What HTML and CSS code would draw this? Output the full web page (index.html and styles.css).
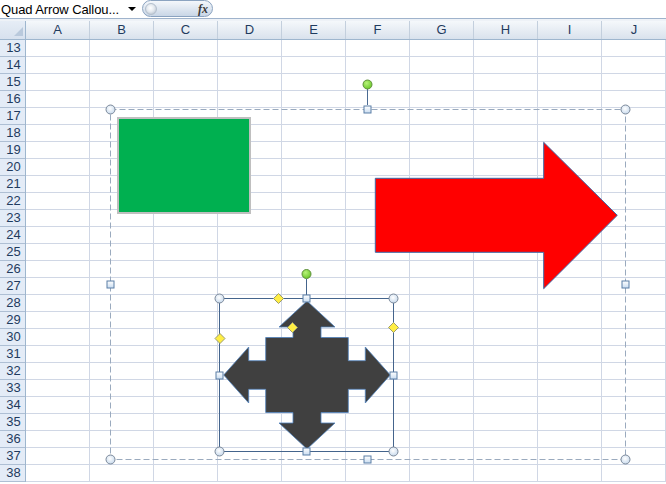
FILE: index.html
```html
<!DOCTYPE html>
<html>
<head>
<meta charset="utf-8">
<link rel="stylesheet" href="styles.css">
</head>
<body>
<div class="app">
  <div class="formula-bar">
    <div class="namebox"><span class="name-text">Quad Arrow Callou...</span><span class="dd"></span></div>
    <div class="fx-btn"><span class="knob"></span><span class="fx">fx</span></div>
    <div class="formula-input"></div>
  </div>
  <div class="bar-gap"></div>
  <div class="col-headers">
    <div class="corner"><span class="corner-tri"></span></div>
    <div class="col-head">A</div><div class="col-head">B</div><div class="col-head">C</div><div class="col-head">D</div><div class="col-head">E</div><div class="col-head">F</div><div class="col-head">G</div><div class="col-head">H</div><div class="col-head">I</div><div class="col-head">J</div>
  </div>
  <div class="body">
    <div class="row-headers">
      <div class="row-head">13</div><div class="row-head">14</div><div class="row-head">15</div><div class="row-head">16</div><div class="row-head">17</div><div class="row-head">18</div><div class="row-head">19</div><div class="row-head">20</div><div class="row-head">21</div><div class="row-head">22</div><div class="row-head">23</div><div class="row-head">24</div><div class="row-head">25</div><div class="row-head">26</div><div class="row-head">27</div><div class="row-head">28</div><div class="row-head">29</div><div class="row-head">30</div><div class="row-head">31</div><div class="row-head">32</div><div class="row-head">33</div><div class="row-head">34</div><div class="row-head">35</div><div class="row-head">36</div><div class="row-head">37</div><div class="row-head">38</div>
    </div>
    <div class="cells"></div>
  </div>

  <svg class="canvas" width="666" height="484" viewBox="0 0 666 484" xmlns="http://www.w3.org/2000/svg">
    <defs>
      <radialGradient id="hc" cx="0.45" cy="0.4" r="0.6">
        <stop offset="0" stop-color="#ffffff"/>
        <stop offset="1" stop-color="#c7d9ec"/>
      </radialGradient>
      <linearGradient id="hs" x1="0" y1="0" x2="0" y2="1">
        <stop offset="0" stop-color="#ffffff"/>
        <stop offset="1" stop-color="#c9dcf0"/>
      </linearGradient>
      <radialGradient id="gr" cx="0.4" cy="0.35" r="0.65">
        <stop offset="0" stop-color="#b8f27a"/>
        <stop offset="1" stop-color="#6cc92a"/>
      </radialGradient>
    </defs>

    <!-- shapes -->
    <rect x="118" y="118" width="132" height="95" fill="#00b050" stroke="#bfbfbf" stroke-width="2"/>
    <path d="M375.3,178.3 L543.7,178.3 L543.7,142.3 L617.3,215.3 L543.7,288.7 L543.7,252.3 L375.3,252.3 Z" fill="#ff0000" stroke="#3d6aa8" stroke-width="1"/>
    <path d="M307,301 L335,327 L321,327 L321,337.5 L348.3,337.5 L348.3,360.7 L365.3,360.7 L365.3,347 L390.3,375 L365.3,403 L365.3,389.3 L348.3,389.3 L348.3,412.5 L321,412.5 L321,423 L335,423 L307,449 L279,423 L293,423 L293,412.5 L265.7,412.5 L265.7,389.3 L248.7,389.3 L248.7,403 L223.7,375 L248.7,347 L248.7,360.7 L265.7,360.7 L265.7,337.5 L293,337.5 L293,327 L279,327 Z" fill="#404040" stroke="#4f81bd" stroke-width="0.8"/>

    <!-- group selection -->
    <rect x="110.5" y="109.5" width="515" height="350" fill="none" stroke="#9aaabe" stroke-width="1" stroke-dasharray="6 3"/>
    <line x1="367.5" y1="89" x2="367.5" y2="105" stroke="#4a6a92" stroke-width="1"/>
    <circle cx="367.5" cy="84.5" r="4.5" fill="url(#gr)" stroke="#5f8f3c" stroke-width="1"/>
    <g fill="url(#hc)" stroke="#7b8899" stroke-width="1">
      <circle cx="110.5" cy="109.5" r="4.5"/>
      <circle cx="625.5" cy="109.5" r="4.5"/>
      <circle cx="110.5" cy="459.5" r="4.5"/>
      <circle cx="625.5" cy="459.5" r="4.5"/>
    </g>
    <g fill="url(#hs)" stroke="#5b7ea6" stroke-width="1">
      <rect x="364" y="106" width="7" height="7"/>
      <rect x="107" y="281" width="7" height="7"/>
      <rect x="622" y="281" width="7" height="7"/>
      <rect x="364" y="456" width="7" height="7"/>
    </g>

    <!-- shape selection -->
    <rect x="219.5" y="298.5" width="174" height="153" fill="none" stroke="#44648c" stroke-width="1"/>
    <line x1="306.5" y1="279" x2="306.5" y2="295" stroke="#44648c" stroke-width="1"/>
    <circle cx="306.5" cy="274" r="4.5" fill="url(#gr)" stroke="#5f8f3c" stroke-width="1"/>
    <g fill="url(#hc)" stroke="#7b8899" stroke-width="1">
      <circle cx="219.5" cy="298.5" r="4.5"/>
      <circle cx="393.5" cy="298.5" r="4.5"/>
      <circle cx="219.5" cy="451.5" r="4.5"/>
      <circle cx="393.5" cy="451.5" r="4.5"/>
    </g>
    <g fill="url(#hs)" stroke="#5b7ea6" stroke-width="1">
      <rect x="303" y="295" width="7" height="7"/>
      <rect x="216" y="372" width="7" height="7"/>
      <rect x="390" y="372" width="7" height="7"/>
      <rect x="303" y="448" width="7" height="7"/>
    </g>
    <g fill="#ffee44" stroke="#9c9c70" stroke-width="1">
      <path d="M278.5,293.5 L283.5,298.5 L278.5,303.5 L273.5,298.5 Z"/>
      <path d="M220,333.5 L225,338.5 L220,343.5 L215,338.5 Z"/>
      <path d="M292.5,322.5 L297.5,327.5 L292.5,332.5 L287.5,327.5 Z"/>
      <path d="M393.5,322.5 L398.5,327.5 L393.5,332.5 L388.5,327.5 Z"/>
    </g>
  </svg>
</div>
</body>
</html>
```

FILE: styles.css
```css
* { box-sizing: border-box; }
html, body { margin: 0; padding: 0; }
body {
  width: 666px;
  height: 484px;
  overflow: hidden;
  background: #ffffff;
  font-family: "Liberation Sans", Arial, sans-serif;
}
.app {
  position: relative;
  width: 666px;
  height: 484px;
  overflow: hidden;
}
.formula-bar {
  display: flex;
  height: 19px;
  border-bottom: 1px solid #9fb3cc;
  background: #ffffff;
}
.namebox {
  width: 142px;
  display: flex;
  align-items: center;
  justify-content: space-between;
  padding-left: 1px;
  padding-right: 6px;
}
.name-text {
  font-size: 13px;
  letter-spacing: -0.1px;
  color: #000000;
  white-space: nowrap;
  line-height: 17px;
}
.dd {
  width: 0;
  height: 0;
  border-left: 4px solid transparent;
  border-right: 4px solid transparent;
  border-top: 4px solid #000000;
}
.fx-btn {
  width: 71px;
  height: 17px;
  border: 1px solid #8ba3c0;
  border-radius: 9px;
  background: linear-gradient(to bottom, #f4f7fb 0%, #dfe7f1 50%, #c9d6e6 100%);
  display: flex;
  align-items: center;
  justify-content: space-between;
  padding: 0 4px 0 2px;
}
.knob {
  width: 12px;
  height: 12px;
  border-radius: 50%;
  background: radial-gradient(circle at 45% 40%, #ffffff 0%, #e4e9ef 45%, #aab6c4 100%);
  border: 1px solid #b3bfcd;
}
.fx {
  font-family: "Liberation Serif", "Times New Roman", serif;
  font-style: italic;
  font-weight: bold;
  font-size: 12px;
  color: #3a3a3a;
  line-height: 14px;
}
.formula-input {
  flex: 1;
  background: #ffffff;
}
.bar-gap {
  height: 2px;
  background: #eef2f7;
}
.col-headers {
  display: flex;
  height: 19px;
  border-bottom: 1px solid #9eb6ce;
  background: linear-gradient(to bottom, #f5f8fb 0%, #e6ecf3 55%, #d9e2ed 100%);
}
.corner {
  position: relative;
  width: 26px;
  border-right: 1px solid #9eb6ce;
  background: linear-gradient(to bottom, #e6edf6, #d7e1ee);
}
.corner-tri {
  position: absolute;
  right: 2px;
  bottom: 3px;
  width: 0;
  height: 0;
  border-left: 9px solid transparent;
  border-bottom: 9px solid #b9c9dc;
}
.col-head {
  width: 64px;
  border-right: 1px solid #c3cfdd;
  text-align: center;
  font-size: 13px;
  line-height: 18px;
  color: #1f3b5e;
}
.col-head:last-child { border-right: none; }
.body {
  display: flex;
}
.row-headers {
  width: 26px;
  border-right: 1px solid #9eb6ce;
  background: #e4ecf7;
}
.row-head {
  height: 17px;
  border-bottom: 1px solid #aebfd4;
  text-align: center;
  font-size: 13px;
  line-height: 16px;
  color: #1f3b5e;
  padding-left: 2px;
}
.cells {
  flex: 1;
  height: 442px;
  background-color: #ffffff;
  background-image:
    linear-gradient(to right, transparent 63px, #d0d7e5 63px),
    linear-gradient(to bottom, transparent 16px, #d0d7e5 16px);
  background-size: 64px 17px, 64px 17px;
}
.canvas {
  position: absolute;
  left: 0;
  top: 0;
}
```
